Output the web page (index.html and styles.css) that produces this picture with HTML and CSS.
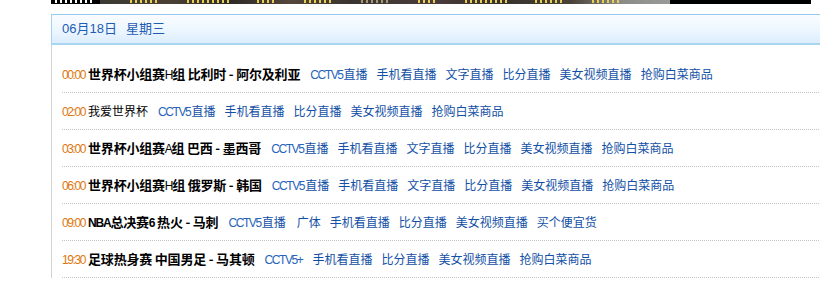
FILE: index.html
```html
<!DOCTYPE html>
<html lang="zh-CN">
<head>
<meta charset="utf-8">
<title>直播节目表</title>
<link rel="stylesheet" href="styles.css">
</head>
<body>
<div class="page">
  <div class="banner" aria-hidden="true">
    <i class="bn-mark bn-white"></i>
    <i class="bn-mark"></i>
    <i class="bn-mark bn-long"></i>
    <i class="bn-mark bn-short"></i>
    <i class="bn-mark"></i>
    <i class="bn-mark bn-dim"></i>
    <i class="bn-mark bn-short"></i>
    <i class="bn-mark bn-long"></i>
    <i class="bn-mark"></i>
    <i class="bn-mark"></i>
  </div>
  <div class="box">
    <div class="box-hd"><span class="date">06月18日</span><span class="week">星期三</span></div>
    <ul class="list">
      <li><span class="time">00:00</span><b class="title">世界杯小组赛<span class="en">H</span>组 比利时 - 阿尔及利亚</b><a href="#"><span class="en">CCTV5</span>直播</a><a href="#">手机看直播</a><a href="#">文字直播</a><a href="#">比分直播</a><a href="#">美女视频直播</a><a href="#">抢购白菜商品</a></li>
      <li><span class="time">02:00</span><span class="title title-normal">我爱世界杯</span><a href="#"><span class="en">CCTV5</span>直播</a><a href="#">手机看直播</a><a href="#">比分直播</a><a href="#">美女视频直播</a><a href="#">抢购白菜商品</a></li>
      <li><span class="time">03:00</span><b class="title">世界杯小组赛<span class="en">A</span>组 巴西 - 墨西哥</b><a href="#"><span class="en">CCTV5</span>直播</a><a href="#">手机看直播</a><a href="#">文字直播</a><a href="#">比分直播</a><a href="#">美女视频直播</a><a href="#">抢购白菜商品</a></li>
      <li><span class="time">06:00</span><b class="title">世界杯小组赛<span class="en">H</span>组 俄罗斯 - 韩国</b><a href="#"><span class="en">CCTV5</span>直播</a><a href="#">手机看直播</a><a href="#">文字直播</a><a href="#">比分直播</a><a href="#">美女视频直播</a><a href="#">抢购白菜商品</a></li>
      <li><span class="time">09:00</span><b class="title"><span class="en en-bold">NBA</span>总决赛<span class="en en-bold">6</span> 热火 - 马刺</b><a href="#" class="link-wide"><span class="en">CCTV5</span>直播</a><a href="#">广体</a><a href="#">手机看直播</a><a href="#">比分直播</a><a href="#">美女视频直播</a><a href="#">买个便宜货</a></li>
      <li><span class="time">19:30</span><b class="title">足球热身赛 中国男足 - 马其顿</b><a href="#"><span class="en">CCTV5+</span></a><a href="#">手机看直播</a><a href="#">比分直播</a><a href="#">美女视频直播</a><a href="#">抢购白菜商品</a></li>
    </ul>
  </div>
</div>
</body>
</html>
```

FILE: styles.css
```css
html, body {
  margin: 0;
  padding: 0;
  background: #fff;
  overflow: hidden;
}

body {
  font-family: "Noto Sans CJK SC", sans-serif;
}

.page {
  padding-left: 51px;
}

/* cropped banner strip at the very top (an image in the original) */
.banner {
  width: 760px;
  height: 4px;
  overflow: hidden;
  display: flex;
  align-items: flex-start;
  gap: 27px;
  padding-left: 4px;
  box-sizing: border-box;
  background: linear-gradient(to right,
    #000 0, #000 49px,
    #3b3a33 49px, #4a4035 120px, #2e2a28 180px, #55463a 240px,
    #3a3330 300px, #4b3c3a 380px, #35302e 450px, #4a4238 520px,
    #8a8a88 569px, #9a9a98 619px,
    #000 619px, #000 760px);
}

.bn-mark {
  display: block;
  width: 30px;
  height: 3px;
  background: repeating-linear-gradient(to right, #e8cf52 0, #e8cf52 2px, transparent 2px, transparent 5px);
}

.bn-white {
  width: 40px;
  margin-right: 8px;
  background: repeating-linear-gradient(to right, #fff 0, #fff 2px, transparent 2px, transparent 5px);
}

.bn-long {
  width: 43px;
}

.bn-short {
  width: 20px;
}

.bn-dim {
  background: repeating-linear-gradient(to right, #a49873 0, #a49873 2px, transparent 2px, transparent 5px);
}

/* schedule box */
.box {
  margin-top: 10px;
  width: 800px;
}

.box-hd {
  height: 28px;
  line-height: 28px;
  border-top: 1px solid #93caee;
  border-left: 1px solid #a6d3f2;
  border-bottom: 2px solid #a9d4f2;
  background: linear-gradient(to bottom, #f9fcff 0%, #eef7ff 50%, #dcedfd 100%);
  padding-left: 10px;
  font-family: "Liberation Sans", "Noto Sans CJK SC", sans-serif;
  font-size: 13px;
  color: #1f5cb5;
}

.date {
  margin-right: 9px;
}

.list {
  list-style: none;
  margin: 0;
  padding: 11px 0 0 10px;
  border-left: 1px solid #d3d3d3;
}

.list li {
  height: 36px;
  line-height: 36px;
  border-bottom: 1px dotted #c4c4c4;
  white-space: nowrap;
  font-size: 12px;
}

.en {
  font-family: "Liberation Sans", sans-serif;
  font-weight: normal;
  letter-spacing: -1.4px;
}

.en-bold {
  font-weight: bold;
  letter-spacing: -1.2px;
}

.time {
  font-family: "Liberation Sans", sans-serif;
  letter-spacing: -1.4px;
  color: #e0760c;
  font-size: 12px;
  margin-right: 3px;
}

.title {
  color: #000;
  font-size: 13px;
  font-weight: bold;
  letter-spacing: -0.2px;
  margin-right: 10px;
}

.title .en {
  font-size: 12px;
}

.title-normal {
  font-weight: normal;
  font-size: 12px;
  letter-spacing: 0;
}

.list a {
  color: #124fa6;
  text-decoration: none;
  font-size: 12px;
  margin-right: 9px;
}

.list a .en {
  color: #2864bb;
  margin-right: 1px;
}

.list a.link-wide {
  margin-right: 11px;
}
```
